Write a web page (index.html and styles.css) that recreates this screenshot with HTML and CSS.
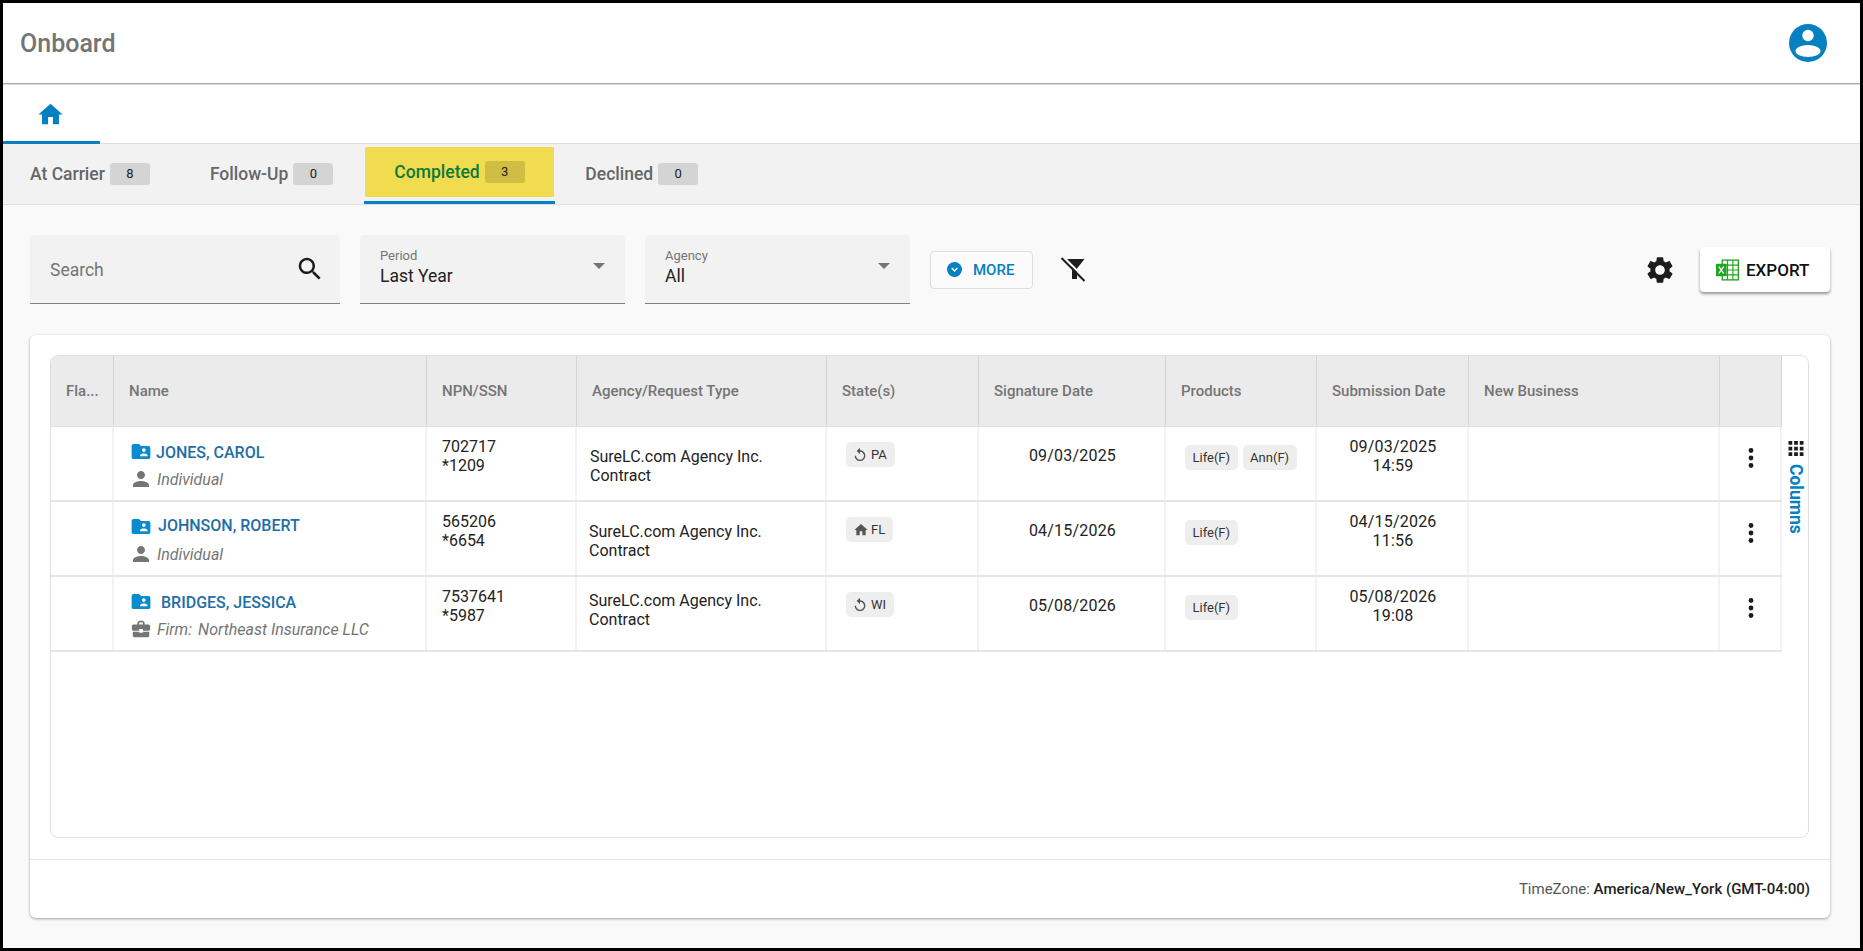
FILE: index.html
```html
<!DOCTYPE html>
<html>

<head>
	<title>Onboard</title>
	<meta charset="utf-8">
	<link rel="stylesheet" href="styles.css">
</head>

<body>
	<svg class="sprite" xmlns="http://www.w3.org/2000/svg">
		<symbol id="i-home" viewBox="0 0 24 24"><path d="M10 20v-6h4v6h5v-8h3L12 3 2 12h3v8z"/></symbol>
		<symbol id="i-search" viewBox="0 0 24 24"><path d="M15.5 14h-.79l-.28-.27C15.41 12.59 16 11.11 16 9.5 16 5.91 13.09 3 9.5 3S3 5.91 3 9.5 5.91 16 9.5 16c1.61 0 3.09-.59 4.23-1.57l.27.28v.79l5 4.99L20.49 19l-4.99-5zm-6 0C7.01 14 5 11.99 5 9.5S7.01 5 9.5 5 14 7.01 14 9.5 11.99 14 9.5 14z"/></symbol>
		<symbol id="i-folder" viewBox="0 0 20 16"><path d="M18 2h-8L8 0H2C.9 0 0 .9 0 2v12c0 1.1.9 2 2 2h16c1.1 0 2-.9 2-2V4c0-1.100-.9-2-2-2zm-5 2.500c1.100 0 2 .9 2 2s-.9 2-2 2-2-.9-2-2 .9-2 2-2zm4 8.500H9v-1c0-1.330 2.670-2 4-2s4 .67 4 2v1z"/></symbol>
		<symbol id="i-person" viewBox="0 0 24 24"><path d="M12 12c2.210 0 4-1.790 4-4s-1.790-4-4-4-4 1.790-4 4 1.790 4 4 4zm0 2c-2.670 0-8 1.340-8 4v2h16v-2c0-2.660-5.330-4-8-4z"/></symbol>
		<symbol id="i-case" viewBox="0 0 24 24"><path d="M10 16v-1H3.010L3 19c0 1.110.89 2 2 2h14c1.110 0 2-.89 2-2v-4h-7v1h-4zm10-9h-4.010V5l-2-2h-4l-2 2v2H4c-1.100 0-2 .9-2 2v3c0 1.110.89 2 2 2h6v-2h4v2h6c1.100 0 2-.9 2-2V9c0-1.100-.9-2-2-2zm-6 0h-4V5h4v2z"/></symbol>
		<symbol id="i-replay" viewBox="0 0 24 24"><path d="M12 5V1L7 6l5 5V7c3.310 0 6 2.690 6 6s-2.690 6-6 6-6-2.690-6-6H4c0 4.420 3.580 8 8 8s8-3.580 8-8-3.580-8-8-8z"/></symbol>
		<symbol id="i-dots" viewBox="0 0 6 20"><circle cx="3" cy="2.500" r="2.400"/><circle cx="3" cy="10" r="2.400"/><circle cx="3" cy="17.500" r="2.400"/></symbol>
	</svg>

	<header class="topbar">
		<h1 class="app-title">Onboard</h1>
		<svg class="user-icon" viewBox="0 0 38 38"><circle cx="19" cy="19" r="19" fill="#0580c0"/><circle cx="19" cy="11.500" r="5.700" fill="#fff"/><ellipse cx="19" cy="27" rx="12.500" ry="6" fill="#fff"/></svg>
	</header>

	<nav class="home-tabs">
		<a class="home-tab" href="javascript:;"><svg class="home-icon"><use href="#i-home"/></svg></a>
	</nav>

	<nav class="sub-tabs">
		<a class="sub-tab" href="javascript:;">At Carrier <span class="count">8</span></a>
		<a class="sub-tab" href="javascript:;">Follow-Up <span class="count">0</span></a>
		<a class="sub-tab active" href="javascript:;"><span class="active-fill">Completed <span class="count">3</span></span></a>
		<a class="sub-tab" href="javascript:;">Declined <span class="count">0</span></a>
	</nav>

	<main class="content">
		<div class="filters">
			<div class="field search-field">
				<span class="search-text">Search</span>
				<svg class="search-icon"><use href="#i-search"/></svg>
			</div>
			<div class="field select-field">
				<label>Period</label>
				<span class="value">Last Year</span>
				<i class="caret"></i>
			</div>
			<div class="field select-field">
				<label>Agency</label>
				<span class="value">All</span>
				<i class="caret"></i>
			</div>
			<button class="more-btn">
				<svg viewBox="0 0 16 16"><circle cx="8" cy="8" r="8" fill="#0580c0"/><path d="M5 6.500l3 3 3-3" fill="none" stroke="#fff" stroke-width="1.600"/></svg>
				MORE
			</button>
			<svg class="filter-off" viewBox="0 0 26 26"><path d="M7 2h17.500L17 11.500V22h-5V10z" fill="#1c1c1c"/><path d="M4 .5L27 23.500" stroke="#f9f9f9" stroke-width="2" fill="none"/><path d="M1.500 1L24.500 24" stroke="#1c1c1c" stroke-width="2" fill="none"/></svg>
			<div class="spacer"></div>
			<svg class="gear" viewBox="0 0 24 24"><path d="M19.140 12.940c.04-.3.06-.61.06-.94 0-.32-.02-.64-.07-.94l2.030-1.580c.18-.14.23-.41.12-.61l-1.920-3.320c-.12-.22-.37-.29-.59-.22l-2.390.96c-.5-.38-1.030-.7-1.620-.94l-.36-2.540c-.04-.24-.24-.41-.48-.41h-3.840c-.24 0-.43.17-.47.41l-.36 2.540c-.59.24-1.130.57-1.620.94l-2.390-.96c-.22-.08-.47 0-.59.22L2.740 8.870c-.12.21-.08.47.12.61l2.030 1.580c-.05.3-.09.63-.09.94s.02.64.07.94l-2.030 1.580c-.18.14-.23.41-.12.61l1.920 3.320c.12.22.37.29.59.22l2.390-.96c.5.38 1.030.7 1.620.94l.36 2.540c.05.24.24.41.48.41h3.840c.24 0 .44-.17.47-.41l.36-2.540c.59-.24 1.130-.56 1.620-.94l2.390.96c.22.08.47 0 .59-.22l1.920-3.320c.12-.22.07-.47-.12-.61l-2.010-1.580zM12 15.600c-1.980 0-3.600-1.620-3.600-3.600s1.620-3.600 3.600-3.600 3.600 1.620 3.600 3.600-1.620 3.600-3.600 3.600z"/></svg>
			<button class="export-btn">
				<svg viewBox="0 0 24 22"><rect x="6.500" y=".7" width="16.800" height="20.600" fill="#fff" stroke="#1fa51f" stroke-width="1.400"/><path d="M6.500 5.900h16.800M6.500 11h16.800M6.500 16.100h16.800M12 .7v20.600M17.600 .7v20.600" stroke="#1fa51f" stroke-width="1.200" fill="none"/><rect x="0" y="4.500" width="11" height="13" fill="#1fa51f"/><path d="M3 7.500l5 7M8 7.500l-5 7" stroke="#fff" stroke-width="1.400"/></svg>
				EXPORT
			</button>
		</div>

		<section class="card">
			<div class="grid-box">
				<div class="grid-main">
					<div class="row head">
						<div class="cell">Fla...</div>
						<div class="cell">Name</div>
						<div class="cell">NPN/SSN</div>
						<div class="cell">Agency/Request Type</div>
						<div class="cell">State(s)</div>
						<div class="cell">Signature Date</div>
						<div class="cell">Products</div>
						<div class="cell">Submission Date</div>
						<div class="cell">New Business</div>
						<div class="cell"></div>
					</div>

					<div class="row">
						<div class="cell"></div>
						<div class="cell name-cell">
							<a class="name-line gap-a" href="javascript:;"><svg class="folder"><use href="#i-folder"/></svg><span>JONES, CAROL</span></a>
							<div class="sub-line"><svg class="sub-icon"><use href="#i-person"/></svg><em>Individual</em></div>
						</div>
						<div class="cell two-line npn">702717<br>*1209</div>
						<div class="cell agency first">SureLC.com Agency Inc.<br>Contract</div>
						<div class="cell state-cell"><span class="chip state"><svg class="chip-icon"><use href="#i-replay"/></svg>PA</span></div>
						<div class="cell date">09/03/2025</div>
						<div class="cell products"><span class="chip">Life(F)</span><span class="chip">Ann(F)</span></div>
						<div class="cell two-line submitted">09/03/2025<br>14:59</div>
						<div class="cell"></div>
						<div class="cell action"><svg class="dots"><use href="#i-dots"/></svg></div>
					</div>

					<div class="row">
						<div class="cell"></div>
						<div class="cell name-cell">
							<a class="name-line gap-b" href="javascript:;"><svg class="folder"><use href="#i-folder"/></svg><span>JOHNSON, ROBERT</span></a>
							<div class="sub-line"><svg class="sub-icon"><use href="#i-person"/></svg><em>Individual</em></div>
						</div>
						<div class="cell two-line npn">565206<br>*6654</div>
						<div class="cell agency">SureLC.com Agency Inc.<br>Contract</div>
						<div class="cell state-cell"><span class="chip state"><svg class="chip-icon home"><use href="#i-home"/></svg>FL</span></div>
						<div class="cell date">04/15/2026</div>
						<div class="cell products"><span class="chip">Life(F)</span></div>
						<div class="cell two-line submitted">04/15/2026<br>11:56</div>
						<div class="cell"></div>
						<div class="cell action"><svg class="dots"><use href="#i-dots"/></svg></div>
					</div>

					<div class="row">
						<div class="cell"></div>
						<div class="cell name-cell">
							<a class="name-line gap-c" href="javascript:;"><svg class="folder"><use href="#i-folder"/></svg><span>BRIDGES, JESSICA</span></a>
							<div class="sub-line"><svg class="sub-icon case"><use href="#i-case"/></svg><em class="firm">Firm:</em><em>Northeast Insurance LLC</em></div>
						</div>
						<div class="cell two-line npn">7537641<br>*5987</div>
						<div class="cell agency high">SureLC.com Agency Inc.<br>Contract</div>
						<div class="cell state-cell"><span class="chip state"><svg class="chip-icon"><use href="#i-replay"/></svg>WI</span></div>
						<div class="cell date">05/08/2026</div>
						<div class="cell products"><span class="chip">Life(F)</span></div>
						<div class="cell two-line submitted">05/08/2026<br>19:08</div>
						<div class="cell"></div>
						<div class="cell action"><svg class="dots"><use href="#i-dots"/></svg></div>
					</div>
				</div>

				<aside class="columns-rail">
					<svg viewBox="0 0 16 16"><path d="M0 0h4v4H0zM6 0h4v4H6zM12 0h4v4h-4zM0 6h4v4H0zM6 6h4v4H6zM12 6h4v4h-4zM0 12h4v4H0zM6 12h4v4H6zM12 12h4v4h-4z"/></svg>
					<span>Columns</span>
				</aside>
			</div>

			<footer class="card-foot">TimeZone:&nbsp;<b>America/New_York (GMT-04:00)</b></footer>
		</section>
	</main>
</body>

</html>
```

FILE: styles.css
```css
* {
	box-sizing: border-box;
}

body {
	margin: 0;
	height: 951px;
	border: 3px solid #000;
	background: #f9f9f9;
	font: 16px Roboto, "Liberation Sans", sans-serif;
	color: #222;
	overflow: hidden;
}

a {
	text-decoration: none;
}

.sprite {
	display: none;
}

/* top bar */
.topbar {
	height: 81px;
	padding: 0 33px 0 17px;
	display: flex;
	align-items: center;
	justify-content: space-between;
	background: #fff;
	border-bottom: 1px solid #aaa;
	box-shadow: 0 1px 1px #ddd;
	position: relative;
}

.app-title {
	margin: 0;
	font-size: 25px;
	font-weight: 500;
	color: #757575;
}

.user-icon {
	width: 38px;
	height: 38px;
}

.home-tabs {
	height: 60px;
	background: #fff;
	border-bottom: 1px solid #ddd;
}

.home-tab {
	display: flex;
	justify-content: center;
	width: 97px;
	height: 60px;
	padding: 16px 3px 0 0;
	border-bottom: 3px solid #0580c0;
}

.home-icon {
	width: 29px;
	height: 29px;
	fill: #0580c0;
}

/* status tabs */
.sub-tabs {
	height: 61px;
	display: flex;
	background: #f2f2f2;
	border-bottom: 1px solid #ddd;
	padding-left: 27px;
}

.sub-tab {
	display: flex;
	align-items: center;
	height: 60px;
	font-size: 17.5px;
	font-weight: 500;
	color: #666;
	margin-right: 60px;
}

.count {
	display: inline-block;
	width: 40px;
	height: 22px;
	margin-left: 5px;
	border-radius: 3px;
	background: #d4d4d4;
	color: #222;
	font-size: 13px;
	font-weight: 400;
	line-height: 22px;
	text-align: center;
}

.sub-tab.active {
	width: 191px;
	margin: 0 30px 0 -29px;
	padding: 3px 1px 0;
	align-items: flex-start;
	border-bottom: 3px solid #0580c0;
	color: #0b7a3e;
}

.active-fill {
	display: flex;
	align-items: center;
	width: 189px;
	height: 50px;
	padding-left: 29px;
	background: #f0dc4e;
}

.active-fill .count {
	background: #d0bd43;
}

/* filters */
.content {
	padding: 30px 30px 0 27px;
}

.filters {
	display: flex;
	align-items: center;
	height: 69px;
}

.field {
	position: relative;
	height: 69px;
	margin-right: 20px;
	background: #f2f2f2;
	border-bottom: 1px solid #808080;
	border-radius: 4px 4px 0 0;
}

.search-field {
	width: 310px;
	display: flex;
	align-items: center;
	justify-content: space-between;
	padding: 0 15px 0 20px;
}

.search-text {
	margin-top: 1px;
	font-size: 17.5px;
	color: #757575;
}

.search-icon {
	width: 30px;
	height: 30px;
	fill: #1c1c1c;
}

.select-field {
	width: 265px;
	padding: 13px 20px 0;
}

.select-field label {
	display: block;
	font-size: 13px;
	line-height: 16px;
	color: #757575;
}

.select-field .value {
	display: block;
	font-size: 17.5px;
	line-height: 24px;
	color: #222;
}

.caret {
	position: absolute;
	right: 20px;
	top: 28px;
	border: 6.5px solid transparent;
	border-top: 6px solid #757575;
	border-bottom: 0;
}

.more-btn {
	display: flex;
	align-items: center;
	gap: 11px;
	width: 103px;
	height: 38px;
	padding: 0 0 0 16px;
	border: 1px solid #ddd;
	border-radius: 4px;
	background: #fbfbfb;
	color: #0580c0;
	font: 500 15px Roboto, sans-serif;
}

.more-btn svg {
	width: 15px;
	height: 15px;
}

.filter-off {
	width: 26px;
	height: 26px;
	margin-left: 27px;
}

.spacer {
	flex: 1;
}

.gear {
	width: 32px;
	height: 32px;
	margin-right: 24px;
	fill: #1c1c1c;
}

.export-btn {
	display: flex;
	align-items: center;
	gap: 7px;
	width: 130px;
	height: 45px;
	padding: 0 0 0 16px;
	border: 0;
	border-radius: 4px;
	background: #fff;
	box-shadow: 0 2px 3px rgba(0, 0, 0, .4);
	color: #111;
	font: 500 17px Roboto, sans-serif;
}

.export-btn svg {
	width: 23px;
	height: 22px;
}

/* card + grid */
.card {
	margin-top: 31px;
	height: 583px;
	background: #fff;
	border-radius: 6px;
	box-shadow: 0 1px 3px rgba(0, 0, 0, .35);
	padding: 20px 21px 0 20px;
}

.grid-box {
	display: flex;
	height: 483px;
	border: 1px solid #e0e0e0;
	border-radius: 8px;
	overflow: hidden;
}

.grid-main {
	width: 1731px;
}

.row {
	display: grid;
	grid-template-columns: 63px 313px 150px 250px 152px 187px 151px 152px 251px 62px;
	height: 75px;
	border-bottom: 2px solid #e6e6e6;
}

.cell {
	border-right: 2px solid #f3f3f3;
	min-width: 0;
}

.row.head {
	height: 71px;
	background: #ebebeb;
	border-bottom: 1px solid #e0e0e0;
	font-size: 15px;
	font-weight: 500;
	color: #757575;
}

.head .cell {
	display: flex;
	align-items: center;
	padding-left: 15px;
	border-right: 1px solid #d4d4d4;
}

.name-cell {
	padding: 17px 0 0 18px;
}

.name-line {
	display: flex;
	height: 18px;
	margin-left: -1px;
	font-weight: 500;
	line-height: 18px;
	color: #1f6fa5;
}

.folder {
	width: 20px;
	height: 15px;
	fill: #0a8bd0;
	flex: none;
}

.gap-a {
	gap: 5px;
}

.gap-b {
	gap: 7px;
}

.gap-b span {
	margin-top: -2px;
}

.gap-c {
	gap: 10px;
}

.sub-line {
	display: flex;
	align-items: center;
	height: 24px;
	margin-top: 5px;
	color: #757575;
}

.sub-icon {
	width: 24px;
	height: 24px;
	margin: 0 4px 0 -3px;
	fill: #757575;
	flex: none;
}

.sub-icon.case {
	width: 22px;
	height: 22px;
	margin: 0 5px 0 -2px;
}

.firm {
	margin-right: 6px;
}

.two-line {
	padding: 10px 0 0 15px;
	line-height: 19px;
}

.agency {
	padding: 20px 0 0 12px;
	line-height: 19px;
}

.agency.first {
	padding-left: 13px;
}

.agency.high {
	padding-top: 14px;
}

.state-cell {
	padding: 15px 0 0 19px;
}

.chip {
	display: inline-flex;
	align-items: center;
	height: 25px;
	padding: 0 7.5px;
	border-radius: 5px;
	background: #eee;
	color: #333;
	font-size: 13px;
}

.chip.state {
	padding: 0 8px 0 6px;
}

.chip-icon {
	width: 16px;
	height: 16px;
	margin-right: 3px;
	fill: #555;
}

.chip-icon.home {
	margin: 0 2px 0 1px;
}

.date {
	padding: 19px 0 0 2px;
	line-height: 20px;
	letter-spacing: .2px;
	text-align: center;
}

.products {
	display: flex;
	gap: 5px;
	padding: 18px 0 0 19px;
}

.submitted {
	padding: 10px 0 0 2px;
	letter-spacing: .2px;
	text-align: center;
}

.action {
	padding: 21px 0 0 28px;
}

.dots {
	display: block;
	width: 6px;
	height: 20px;
	fill: #1c1c1c;
}

.columns-rail {
	flex: 1;
	padding: 85px 0 0 6px;
	color: #0580c0;
}

.columns-rail svg {
	display: block;
	width: 16px;
	height: 15px;
	fill: #1c1c1c;
}

.columns-rail span {
	display: block;
	margin-top: 8px;
	writing-mode: vertical-rl;
	font-size: 17.5px;
	font-weight: 700;
	line-height: 16px;
}

.card-foot {
	display: flex;
	justify-content: flex-end;
	align-items: center;
	height: 59px;
	margin: 21px -21px 0 -20px;
	padding: 0 20px 1px 0;
	border-top: 1px solid #e4e4e4;
	font-size: 15px;
	color: #555;
}

.card-foot b {
	font-weight: 500;
	color: #222;
}
```
